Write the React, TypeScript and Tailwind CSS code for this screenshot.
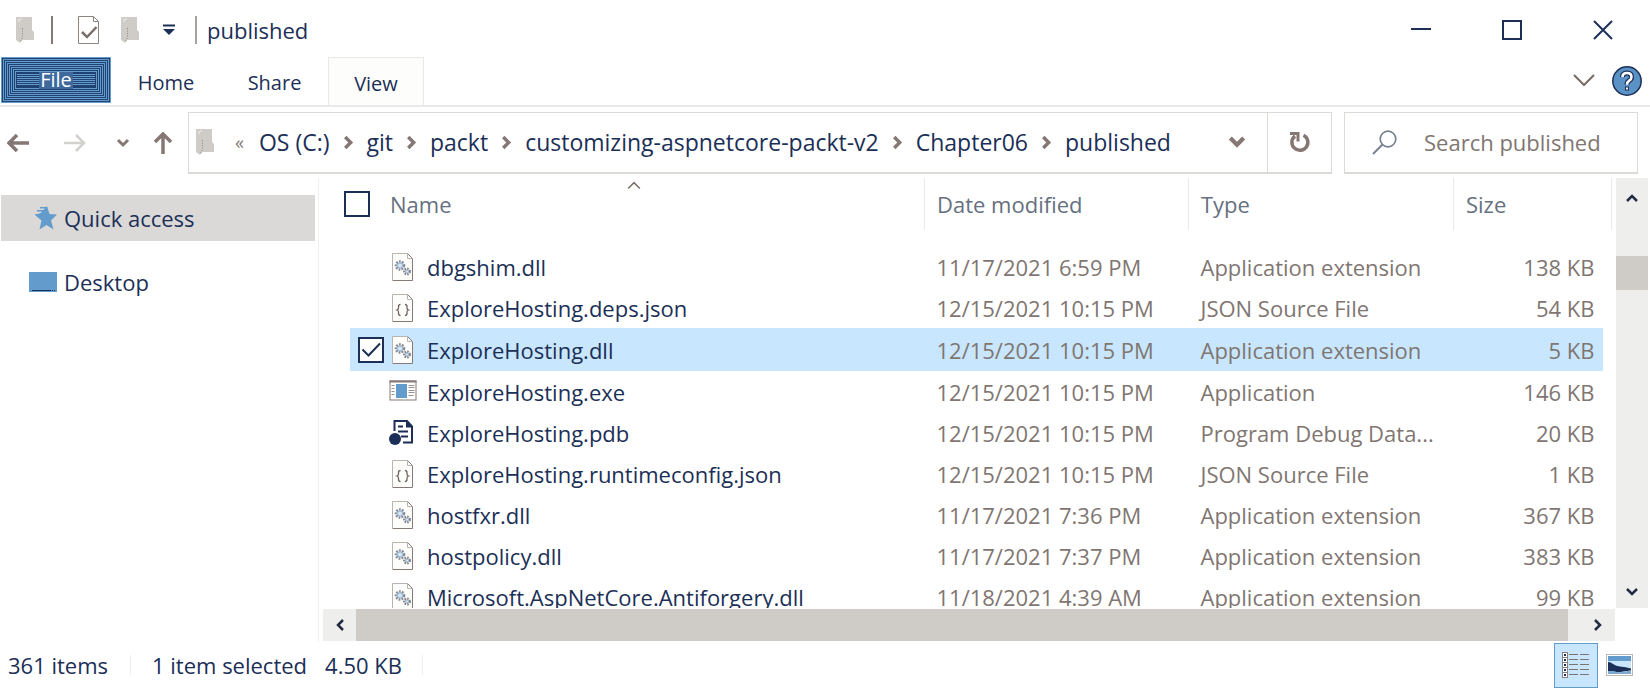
import React from "react";

type Kind = "dll" | "json" | "exe" | "pdb";

interface FileRow {
  name: string;
  date: string;
  type: string;
  size: string;
  kind: Kind;
  selected?: boolean;
}

const files: FileRow[] = [
  { name: "dbgshim.dll", date: "11/17/2021 6:59 PM", type: "Application extension", size: "138 KB", kind: "dll" },
  { name: "ExploreHosting.deps.json", date: "12/15/2021 10:15 PM", type: "JSON Source File", size: "54 KB", kind: "json" },
  { name: "ExploreHosting.dll", date: "12/15/2021 10:15 PM", type: "Application extension", size: "5 KB", kind: "dll", selected: true },
  { name: "ExploreHosting.exe", date: "12/15/2021 10:15 PM", type: "Application", size: "146 KB", kind: "exe" },
  { name: "ExploreHosting.pdb", date: "12/15/2021 10:15 PM", type: "Program Debug Data...", size: "20 KB", kind: "pdb" },
  { name: "ExploreHosting.runtimeconfig.json", date: "12/15/2021 10:15 PM", type: "JSON Source File", size: "1 KB", kind: "json" },
  { name: "hostfxr.dll", date: "11/17/2021 7:36 PM", type: "Application extension", size: "367 KB", kind: "dll" },
  { name: "hostpolicy.dll", date: "11/17/2021 7:37 PM", type: "Application extension", size: "383 KB", kind: "dll" },
  { name: "Microsoft.AspNetCore.Antiforgery.dll", date: "11/18/2021 4:39 AM", type: "Application extension", size: "99 KB", kind: "dll" },
];

const crumbs = ["OS (C:)", "git", "packt", "customizing-aspnetcore-packt-v2", "Chapter06", "published"];

function FolderIcon() {
  return (
    <svg width="19" height="28" viewBox="0 0 19 28" className="shrink-0" aria-hidden="true">
      <path d="M0 1h16v13l2 2v8H6l-2 3-4-3z" fill="#cfccc8" />
      <path d="M6.500 12v9l-2 5" fill="none" stroke="#8c827d" strokeDasharray="1 1.500" />
      <path d="M3 3v3M5 2v2" stroke="#f2f1ef" />
    </svg>
  );
}

function PageOutline({ children }: { children?: React.ReactNode }) {
  return (
    <svg width="28" height="30" viewBox="0 0 28 30" aria-hidden="true">
      <path d="M3.500 1.500h15l5 5v22h-20z" fill="#fdfdfb" />
      <path d="M3.500 28V1.500h15" fill="none" stroke="#b9b4b0" />
      <path d="M18.500 1.500l5 5v22h-20" fill="none" stroke="#857a75" />
      <path d="M18.500 1.500v5h5" fill="none" stroke="#b9b4b0" />
      {children}
    </svg>
  );
}

function FileIcon({ kind }: { kind: Kind }) {
  if (kind === "dll") {
    return (
      <PageOutline>
        <circle cx="11" cy="13.500" r="4" fill="#dbe7f2" stroke="#8a8c93" strokeWidth="2.600" strokeDasharray="1.700 1.200" />
        <circle cx="11" cy="13.500" r="2.500" fill="none" stroke="#8fb6da" />
        <circle cx="18" cy="19.500" r="2.800" fill="#dbe7f2" stroke="#857f80" strokeWidth="2.200" strokeDasharray="1.500 1.100" />
        <circle cx="18" cy="19.500" r="1.500" fill="none" stroke="#8fb6da" />
      </PageOutline>
    );
  }
  if (kind === "json") {
    return (
      <PageOutline>
        <path
          d="M11.500 11.500q-2 0-2 2v1.500q0 1.500-1.500 2 1.500.5 1.500 2v1.500q0 2 2 2M16 11.500q2 0 2 2v1.500q0 1.500 1.500 2-1.500.5-1.500 2v1.500q0 2-2 2"
          fill="none"
          stroke="#6f6460"
          strokeWidth="1.300"
        />
      </PageOutline>
    );
  }
  if (kind === "exe") {
    return (
      <svg width="28" height="30" viewBox="0 0 28 30" aria-hidden="true">
        <rect x="1" y="4" width="26" height="19" fill="#fff" stroke="#857a75" />
        <path d="M.5 4.500h27" stroke="#857a75" strokeWidth="2" />
        <rect x="7" y="7" width="11" height="14" fill="#649bcd" />
        <path d="M2.500 8.500h3M2.500 11.500h3M2.500 14.500h3M2.500 17.500h3M19.500 8.500h6M19.500 10.500h6M19.500 13.500h6M19.500 15.500h6M19.500 18.500h5" stroke="#9a928d" />
      </svg>
    );
  }
  return (
    <svg width="28" height="30" viewBox="0 0 28 30" aria-hidden="true">
      <path d="M5.500 13V3H18l5 5.500V24.500h-9" fill="none" stroke="#1b2f57" strokeWidth="2" />
      <path d="M17 3l6.500 6.500H17z" fill="#1b2f57" />
      <path d="M9 8.500h5M9 13.500h10M12 18.500h7" stroke="#1b2f57" strokeWidth="1.800" />
      <circle cx="6" cy="21" r="6" fill="#1b2f57" />
    </svg>
  );
}

function Chevron({ dir, size = 12, color = "#222b42", w = 2.5 }: { dir: "up" | "down" | "left" | "right"; size?: number; color?: string; w?: number }) {
  const d = {
    up: "M1 9l5-5 5 5",
    down: "M1 3l5 5 5-5",
    left: "M9 1L4 6l5 5",
    right: "M3 1l5 5-5 5",
  }[dir];
  return (
    <svg width={size} height={size} viewBox="0 0 12 12" className="shrink-0 overflow-visible" aria-hidden="true">
      <path d={d} fill="none" stroke={color} strokeWidth={w} />
    </svg>
  );
}

function TitleBar() {
  return (
    <header className="flex h-[57px] items-center justify-between pt-0.5">
      <div className="flex items-center">
        <div className="flex w-[51px] justify-center"><FolderIcon /></div>
        <div className="h-7 w-0.5 bg-[#857a75]" />
        <button aria-label="Properties" className="ml-6">
          <svg width="24" height="30" viewBox="0 0 24 30" aria-hidden="true">
            <path d="M1.500 1.500h15l5 5v22h-20z" fill="#fff" stroke="#8d8580" />
            <path d="M16.500 1.500v5h5" fill="none" stroke="#8d8580" />
            <path d="M5 17l5 5 9.500-10" fill="none" stroke="#7a6f6a" strokeWidth="2.500" />
          </svg>
        </button>
        <button aria-label="New folder" className="ml-5"><FolderIcon /></button>
        <button aria-label="Customize Quick Access Toolbar" className="ml-[23px]">
          <svg width="12" height="12" viewBox="0 0 12 12" aria-hidden="true">
            <path d="M0 1.500h12" stroke="#1b2f57" strokeWidth="2" />
            <path d="M0 5h12l-6 6z" fill="#1b2f57" />
          </svg>
        </button>
        <div className="ml-5 h-7 w-0.5 bg-[#a8a19d]" />
        <h1 className="ml-2.5 text-[22px] leading-8">published</h1>
      </div>
      <div className="flex items-center gap-[71px] pr-[37px]">
        <button aria-label="Minimize">
          <svg width="20" height="20" viewBox="0 0 20 20"><path d="M0 9h20" stroke="#1b2f57" strokeWidth="2" /></svg>
        </button>
        <button aria-label="Maximize">
          <svg width="20" height="20" viewBox="0 0 20 20"><path d="M1 1h18v18H1z" fill="none" stroke="#1b2f57" strokeWidth="2" /></svg>
        </button>
        <button aria-label="Close">
          <svg width="20" height="20" viewBox="0 0 20 20"><path d="M1 1l18 18M19 1L1 19" stroke="#1b2f57" strokeWidth="2" /></svg>
        </button>
      </div>
    </header>
  );
}

function FileTab() {
  const rings = Array.from({ length: 8 }, (_, i) => i);
  return (
    <button className="relative h-[46px] w-[110px] bg-[#1f4273] text-white">
      <svg width="110" height="46" viewBox="0 0 110 46" className="absolute inset-0" aria-hidden="true">
        {rings.map((i) => (
          <rect key={i} x={0.5 + i * 2} y={0.5 + i * 2} width={109 - i * 4} height={45 - i * 4} fill="none" stroke="#649bcd" />
        ))}
        <path d="M16 17.500h78M16 19.500h78M16 21.500h78M16 23.500h78M16 25.500h78M16 27.500h78" stroke="#649bcd" />
        <rect x="38" y="15" width="34" height="17" fill="#3d699c" />
      </svg>
      <span className="relative">File</span>
    </button>
  );
}

function Ribbon() {
  return (
    <nav className="flex h-[50px] items-start border-b-2 border-[#e9e9e8] pl-px text-xl">
      <FileTab />
      <button className="h-12 w-[110px] pt-1">Home</button>
      <button className="h-12 w-[107px] pt-1">Share</button>
      <button className="h-12 w-24 border border-b-0 border-[#e9e9e8] bg-[#fdfdfc] pt-1">View</button>
      <div className="ml-auto flex h-12 items-center gap-4 pr-2">
        <button aria-label="Expand the Ribbon"><Chevron dir="down" size={24} color="#7a6f6a" w={1.1} /></button>
        <button aria-label="Help">
          <svg width="30" height="30" viewBox="0 0 30 30" className="overflow-visible">
            <circle cx="15" cy="15" r="14.200" fill="#5b92c6" stroke="#1b2f57" strokeWidth="1.500" />
            <path d="M10.500 11q0-4 4.500-4t4.500 4q0 2.200-2.300 3.700-2.200 1.400-2.200 4" fill="none" stroke="#1b2f57" strokeWidth="5" />
            <path d="M10.500 11q0-4 4.500-4t4.500 4q0 2.200-2.300 3.700-2.200 1.400-2.200 4" fill="none" stroke="#fff" strokeWidth="2.600" />
            <rect x="13.500" y="21" width="3" height="3" fill="#fff" stroke="#1b2f57" />
          </svg>
        </button>
      </div>
    </nav>
  );
}

function Arrow({ d, color, w = 3.5 }: { d: string; color: string; w?: number }) {
  return (
    <svg width="22" height="22" viewBox="0 0 22 22" aria-hidden="true">
      <path d={d} fill="none" stroke={color} strokeWidth={w} />
    </svg>
  );
}

function AddressBar() {
  return (
    <div className="flex h-[71px] items-center pr-3">
      <div className="flex w-[188px] shrink-0 items-center">
        <button aria-label="Back" className="ml-[7px]"><Arrow color="#857874" d="M22 11H2M10 3l-8 8 8 8" /></button>
        <button aria-label="Forward" className="ml-[35px]"><Arrow color="#d3d1cd" w={2.5} d="M0 11h20M12 3l8 8-8 8" /></button>
        <button aria-label="Recent locations" className="ml-[31px]"><Chevron dir="down" color="#857874" w={3} /></button>
        <button aria-label="Up" className="ml-[23px]"><Arrow color="#857874" d="M11 22V2M3 10l8-8 8 8" /></button>
      </div>
      <div className="flex h-[62px] min-w-0 flex-1 items-center border border-b-2 border-[#dcdad7] pl-[7px] text-[23px]">
        <FolderIcon />
        <span className="ml-5 text-lg leading-none text-[#857874]">«</span>
        <ol className="ml-[15px] flex items-center">
          {crumbs.map((c, i) => (
            <li key={c} className="flex items-center">
              {i > 0 && <span className="flex w-[37px] justify-center"><Chevron dir="right" color="#857874" w={3.2} size={13} /></span>}
              <a href="#" className="whitespace-nowrap">{c}</a>
            </li>
          ))}
        </ol>
        <button aria-label="Previous locations" className="mr-[22px] ml-auto"><Chevron dir="down" size={16} color="#857874" w={3.2} /></button>
        <button aria-label="Refresh" className="flex h-full w-16 items-center justify-center border-l border-[#dcdad7]">
          <svg width="22" height="22" viewBox="0 0 22 22">
            <path d="M14.500 4.200A8 8 0 1 1 6 5" fill="none" stroke="#857874" strokeWidth="3.500" />
            <path d="M1 2.500h8v8" fill="none" stroke="#857874" strokeWidth="3" />
          </svg>
        </button>
      </div>
      <label className="ml-3 flex h-[62px] w-[294px] items-center border border-b-2 border-[#dcdad7] pl-[27px]">
        <svg width="25" height="25" viewBox="0 0 25 25" className="shrink-0" aria-hidden="true">
          <circle cx="16" cy="9" r="7.800" fill="none" stroke="#77818f" strokeWidth="1.700" />
          <path d="M10.500 14.500L1 24" stroke="#77818f" strokeWidth="2" />
        </svg>
        <input
          type="search"
          aria-label="Search published"
          placeholder="Search published"
          className="ml-[27px] w-full min-w-0 bg-transparent text-[22px] outline-none placeholder:text-[#7f7672]"
        />
      </label>
    </div>
  );
}

function Sidebar() {
  return (
    <aside className="w-[319px] shrink-0 border-r border-[#f1f0ee] pt-[17px] pr-[3px] pl-px">
      <a href="#" className="flex h-[46px] items-center bg-[#dad9d7] pl-[31px]">
        <svg width="26" height="26" viewBox="0 0 26 26" aria-hidden="true">
          <path d="M15 1l2.500 8 7.500.5-6 6 2.500 9-7-4.500-7 4.500 2-9-7-6 5-1 2-1V5h2zM8 2h6v1.500H8zM5 5h7v1.500H5z" fill="#649bcd" />
        </svg>
        <span className="ml-1.5">Quick access</span>
      </a>
      <a href="#" className="mt-[18px] flex h-[46px] items-center pl-7">
        <svg width="28" height="20" viewBox="0 0 28 20" aria-hidden="true">
          <path d="M0 0h28v20H0z" fill="#649bcd" />
          <path d="M3 18.500h19" stroke="#1b2f57" />
          <path d="M23 18.500h4" stroke="#1b2f57" strokeDasharray="1 1" />
        </svg>
        <span className="ml-[7px]">Desktop</span>
      </a>
    </aside>
  );
}

function Check({ label, checked }: { label: string; checked?: boolean }) {
  return (
    <label className="relative block size-[26px]">
      <input
        type="checkbox"
        aria-label={label}
        defaultChecked={checked}
        className="peer block size-full appearance-none border-2 border-[#1b2f57] bg-white"
      />
      <svg viewBox="0 0 26 26" className="pointer-events-none invisible absolute inset-0 peer-checked:visible" aria-hidden="true">
        <path d="M4.500 12.500l6 6L22 6.500" fill="none" stroke="#1b2f57" strokeWidth="2" />
      </svg>
    </label>
  );
}

function FileTable() {
  return (
    <table className="w-full table-fixed border-collapse">
      <colgroup>
        <col className="w-[31px]" />
        <col className="w-[39px]" />
        <col />
        <col className="w-[264px]" />
        <col className="w-[265px]" />
        <col className="w-[150px]" />
        <col className="w-2" />
      </colgroup>
      <thead className="text-left text-[#66707f]">
        <tr className="h-[52px]">
          <th colSpan={2} className="pl-[25px]"><Check label="Select all items" /></th>
          <th className="relative pl-px font-normal">
            Name
            <span className="absolute inset-x-0 top-0 flex pl-[238px]"><Chevron dir="up" size={14} color="#7a6f6a" w={1.3} /></span>
          </th>
          <th className="border-l border-[#e9e9e8] pl-3 font-normal">Date modified</th>
          <th className="border-l border-[#e9e9e8] pl-3 font-normal">Type</th>
          <th colSpan={2} className="border-x border-[#e9e9e8] pl-3 font-normal">Size</th>
        </tr>
      </thead>
      <tbody className="text-[#7f7672]">
        <tr className="h-4"><td colSpan={7} /></tr>
        {files.map((f) => {
          const bg = f.selected ? "bg-[#c8e6fd]" : "";
          return (
            <tr key={f.name} className={f.selected ? "h-[43px]" : "h-[41px]"}>
              <td />
              <td className={`pl-2 ${bg}`}>
                {f.selected && <Check label={`Select ${f.name}`} checked />}
              </td>
              <td className={bg}>
                <div className="flex items-center gap-2.5 whitespace-nowrap text-[#1b2f57]">
                  <FileIcon kind={f.kind} />
                  {f.name}
                </div>
              </td>
              <td className={`pl-3 whitespace-nowrap ${bg}`}>{f.date}</td>
              <td className={`pl-3 whitespace-nowrap ${bg}`}>{f.type}</td>
              <td className={`pr-[9px] text-right whitespace-nowrap ${bg}`}>{f.size}</td>
              <td />
            </tr>
          );
        })}
      </tbody>
    </table>
  );
}

function StatusBar() {
  return (
    <footer className="flex h-[46px] items-center pl-2 text-[22px]">
      <span className="w-[122px] whitespace-nowrap">361 items</span>
      <span className="mr-[21px] h-5 w-px bg-[#efeeec]" />
      <span className="whitespace-nowrap">1 item selected</span>
      <span className="ml-[18px] whitespace-nowrap">4.50 KB</span>
      <span className="ml-5 h-5 w-px bg-[#efeeec]" />
      <div className="ml-auto flex items-center pr-[17px]">
        <button aria-label="Details view" className="flex h-[45px] w-11 items-center justify-center border border-[#649bcd] bg-[#c8e6fd]">
          <svg width="28" height="26" viewBox="0 0 28 26">
            {[1, 6, 11, 16, 21].map((y) => (
              <g key={y}>
                <rect x="0.500" y={y - 0.5} width="5" height="5" fill="#fff" stroke="#857f80" />
                <path d={`M2 ${y + 2}h2`} stroke="#1b2f57" strokeWidth="2" />
                <path d={`M7 ${y + 1.5}h9M18 ${y + 1.5}h9`} stroke="#7d7370" />
              </g>
            ))}
          </svg>
        </button>
        <button aria-label="Large icons view" className="ml-2">
          <svg width="27" height="22" viewBox="0 0 27 22">
            <rect x="0.500" y="0.500" width="26" height="21" fill="#fff" stroke="#bdb8b4" />
            <rect x="2" y="2" width="23" height="5" fill="#649bcd" />
            <rect x="2" y="7" width="23" height="8" fill="#c8e6fd" />
            <path d="M2 8q3 0 5 2 3 2 7 2.500 6 .5 11 2v2q-8 1-13 2H2z" fill="#1b2f57" />
            <path d="M2 20v-3h6l4 1.500 13-2V20z" fill="#7ea9d2" />
          </svg>
        </button>
      </div>
    </footer>
  );
}

export default function App() {
  return (
    <div className="flex min-h-screen flex-col bg-white font-['Open_Sans','Noto_Sans',sans-serif] text-[22px] leading-[30px] text-[#1b2f57]">
      <TitleBar />
      <Ribbon />
      <AddressBar />
      <main className="flex h-[464px]">
        <Sidebar />
        <section className="flex min-w-0 flex-1 flex-col">
          <div className="flex h-[430px] pr-0.5">
            <div className="min-w-0 flex-1 overflow-hidden pr-1"><FileTable /></div>
            <div className="flex w-8 flex-col items-center bg-[#eeeeec]">
              <button aria-label="Scroll up" className="flex h-10 items-center"><Chevron dir="up" /></button>
              <div className="mt-[38px] h-[34px] w-full bg-[#cfccc8]" />
              <button aria-label="Scroll down" className="mt-auto flex h-8 items-center"><Chevron dir="down" /></button>
            </div>
          </div>
          <div className="mt-px mr-[35px] ml-1 flex h-8 items-center bg-[#eeeeec]">
            <button aria-label="Scroll left" className="flex w-[33px] justify-center"><Chevron dir="left" /></button>
            <div className="h-full flex-1 bg-[#cfccc8]" />
            <button aria-label="Scroll right" className="flex w-[47px] justify-center pl-3"><Chevron dir="right" /></button>
          </div>
        </section>
      </main>
      <StatusBar />
    </div>
  );
}
